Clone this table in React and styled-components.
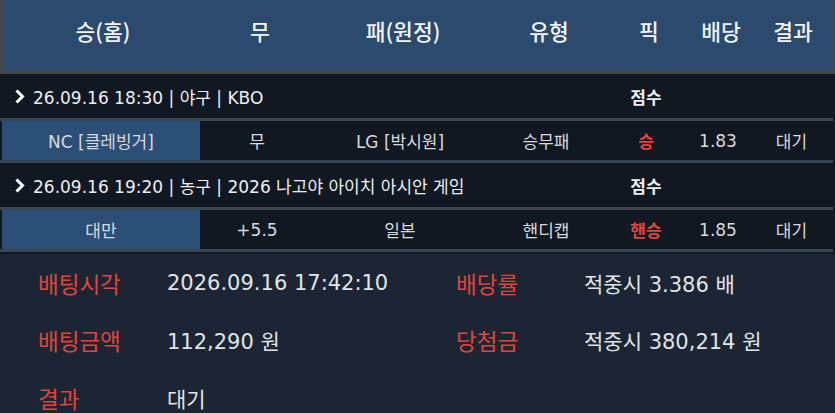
import React from "react";
import styled, { createGlobalStyle } from "styled-components";

const GlobalStyle = createGlobalStyle`
    body {
        margin: 0;
        background-color: #111822;
        font-family: "DejaVu Sans", "Noto Sans CJK KR", sans-serif;
        color: #e6e8ea;
    }
`;

const COLS = "200px 114px 172px 120px 80px 64px 1fr";

const Contenedor = styled.div`
    width: 835px;
    height: 413px;
    overflow: hidden;
    display: flex;
    flex-direction: column;

    & > * {
        flex-shrink: 0;
    }
`;
const Cabecera = styled.div`
    height: 61px;
    padding-bottom: 10px;
    display: grid;
    grid-template-columns: ${COLS};
    align-items: center;
    background-color: #2b4a6d;
    border: 3px solid #454545;
    border-top: none;
    border-right-width: 2px;

    span {
        text-align: center;
        font-size: 21.5px;
        font-weight: 500;
        color: #f2f4f6;
        font-family: "Noto Sans CJK KR", "DejaVu Sans", sans-serif;
    }
`;
const Partido = styled.div`
    height: 44px;
    display: grid;
    grid-template-columns: ${COLS};
    align-items: center;
    font-size: 17px;
    color: #eceef0;
`;
const Info = styled.div`
    grid-column: 1 / span 4;
    display: flex;
    align-items: center;
    padding-left: 13px;
    white-space: nowrap;

    svg {
        width: 14px;
        height: 15px;
        margin-right: 6px;
    }
`;
const Puntos = styled.div`
    text-align: center;
    font-weight: 700;
    font-family: "Noto Sans CJK KR", sans-serif;
`;
const Apuesta = styled.div`
    height: 39px;
    display: grid;
    grid-template-columns: ${COLS};
    align-items: stretch;
    border-top: 3px solid #394552;
    border-bottom: 3px solid #394552;
    margin-right: 2px;
    font-size: 17px;
    color: #d8dadc;
`;
const Celda = styled.div`
    display: flex;
    align-items: center;
    justify-content: center;
    margin-left: ${(p) => (p.$primera ? "2px" : "0")};
    background-color: ${(p) => (p.$activa ? "#2c4f78" : "transparent")};
    color: ${(p) => (p.$pick ? "#e5443a" : "inherit")};
    font-weight: ${(p) => (p.$pick ? 700 : 400)};
`;
const Detalle = styled.div`
    flex: 1;
    margin-top: 2px;
    background-color: #1b2533;
    display: grid;
    grid-template-columns: 129px 289px 128px 1fr;
    grid-auto-rows: 57.5px;
    align-items: center;
    padding: 0 0 0 38px;
    overflow: hidden;
    font-size: 21px;
`;
const Etiqueta = styled.div`
    color: #e0453d;
    font-size: 22.5px;
    font-family: "Noto Sans CJK KR", sans-serif;
`;
const Valor = styled.div`
    color: #e2e4e6;
    white-space: nowrap;
`;

const Flecha = () => (
    <svg viewBox="0 0 14 15">
        <path d="M3.5 1.5 L9.5 7.5 L3.5 13.5" fill="none" stroke="#fff" strokeWidth="3" />
    </svg>
);

const partidos = [
    {
        id: 1,
        info: "26.09.16 18:30 | 야구 | KBO",
        celdas: ["NC [클레빙거]", "무", "LG [박시원]", "승무패", "승", "1.83", "대기"],
    },
    {
        id: 2,
        info: "26.09.16 19:20 | 농구 | 2026 나고야 아이치 아시안 게임",
        celdas: ["대만", "+5.5", "일본", "핸디캡", "핸승", "1.85", "대기"],
    },
];

const App = () => {
    return (
        <Contenedor>
            <GlobalStyle />
            <Cabecera>
                <span>승(홈)</span>
                <span>무</span>
                <span>패(원정)</span>
                <span>유형</span>
                <span>픽</span>
                <span>배당</span>
                <span>결과</span>
            </Cabecera>

            {partidos.map((partido) => (
                <React.Fragment key={partido.id}>
                    <Partido>
                        <Info><Flecha />{partido.info}</Info>
                        <Puntos>점수</Puntos>
                    </Partido>
                    <Apuesta>
                        {partido.celdas.map((texto, i) => (
                            <Celda key={i} $primera={i === 0} $activa={i === 0} $pick={i === 4}>
                                {texto}
                            </Celda>
                        ))}
                    </Apuesta>
                </React.Fragment>
            ))}

            <Detalle>
                <Etiqueta>배팅시각</Etiqueta>
                <Valor>2026.09.16 17:42:10</Valor>
                <Etiqueta>배당률</Etiqueta>
                <Valor>적중시 3.386 배</Valor>
                <Etiqueta>배팅금액</Etiqueta>
                <Valor>112,290 원</Valor>
                <Etiqueta>당첨금</Etiqueta>
                <Valor>적중시 380,214 원</Valor>
                <Etiqueta>결과</Etiqueta>
                <Valor>대기</Valor>
            </Detalle>
        </Contenedor>
    );
};

export default App;
